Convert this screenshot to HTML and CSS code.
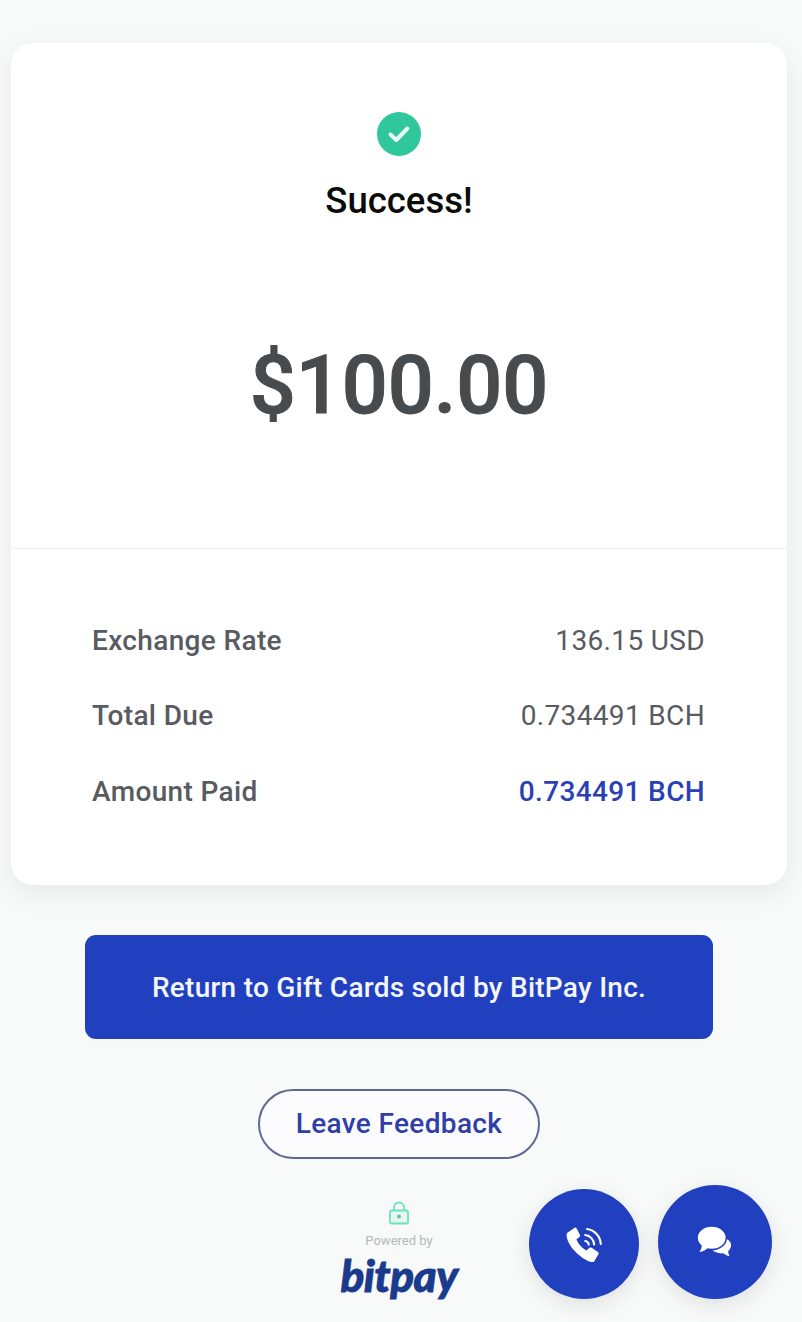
FILE: index.html
```html
<!DOCTYPE html>
<html lang="en">
<head>
  <meta charset="UTF-8" />
  <title>BitPay Invoice</title>
  <link rel="stylesheet" href="styles.css">
</head>
<body>
  <div class="card">
    <div class="card-top">
      <svg class="check" viewBox="0 0 44 44">
        <circle cx="22" cy="22" r="22" fill="#2fc79b" />
        <path d="M13.500 22.500l5.800 5.500 11-11.500" fill="none" stroke="#eafaf5" stroke-width="4" stroke-linecap="round" stroke-linejoin="round" />
      </svg>
      <div class="status">Success!</div>
      <div class="amount">$100.00</div>
    </div>
    <div class="rows">
      <div class="row"><span class="label">Exchange Rate</span><span class="value">136.15 USD</span></div>
      <div class="row"><span class="label">Total Due</span><span class="value">0.734491 BCH</span></div>
      <div class="row"><span class="label">Amount Paid</span><span class="value paid">0.734491 BCH</span></div>
    </div>
  </div>

  <a class="btn-return">Return to Gift Cards sold by BitPay Inc.</a>
  <a class="btn-feedback">Leave Feedback</a>

  <div class="footer">
    <svg class="lock" viewBox="0 0 22 24">
      <path d="M6 10V6.500a5 5 0 0 1 10 0V10" fill="none" stroke="#6fe0bd" stroke-width="1.800" />
      <rect x="2" y="9.500" width="18" height="13" rx="1.500" fill="#e4f8f1" stroke="#6fe0bd" stroke-width="1.800" />
      <circle cx="11" cy="15.500" r="2" fill="#6fb8a8" />
    </svg>
    <div class="powered">Powered by</div>
    <div class="logo">bitpay</div>
  </div>

  <a class="fab fab-call">
    <svg viewBox="3 2 30 30" width="36" height="36">
      <path d="M4.500 7.500L10 3.600c.8-.5 1.500-.3 1.900.4l2.700 5.300c.3.7.2 1.300-.4 1.800l-2.500 2c1 3.200 4.600 7.500 8.300 9.300l2.400-2.100c.6-.5 1.300-.5 1.900-.1l5.300 3.400c.7.500.8 1.200.4 1.900l-3.600 6c-.5.700-1.100.9-2 .7C15 29.500 3.500 18 3.500 9.300c0-.8.300-1.400 1-1.800z" fill="#fff" />
      <path d="M19 9.500a8.500 8.500 0 0 1 7.500 8M20.500 4.500a13.500 13.500 0 0 1 11.500 12.500M19 14.500a3.500 3.500 0 0 1 3 3" fill="none" stroke="#fff" stroke-width="1.700" stroke-linecap="round" />
    </svg>
  </a>
  <a class="fab fab-chat">
    <svg viewBox="0 0 40 36" width="38" height="34">
      <path d="M24 13c6 0 13 3 13 8 0 3-1 5-3 6.500 0 2 .5 4 1.500 5.500-3-.5-5-1.500-6.500-3-5 .5-10-1-12-4z" fill="#fff" />
      <ellipse cx="16.500" cy="13.500" rx="15.500" ry="12.500" fill="#fff" stroke="#2140c0" stroke-width="1.600" />
      <path d="M6 21c0 3-1 5.500-2.500 7.500 4-.5 7-2 9-4.500z" fill="#fff" />
    </svg>
  </a>
</body>
</html>
```

FILE: styles.css
```css
html, body {
  margin: 0;
  height: 100%;
}
body {
  box-sizing: border-box;
  padding-right: 4px;
  background: #f8f9f9;
  font-family: Roboto, sans-serif;
  display: flex;
  flex-direction: column;
  align-items: center;
  overflow: hidden;
}
.card {
  box-sizing: border-box;
  width: 776px;
  height: 842px;
  margin-top: 43px;
  flex-shrink: 0;
  background: #fff;
  border-radius: 22px;
  box-shadow: 0 8px 28px rgba(0, 0, 0, 0.07);
}
.card-top {
  height: 505px;
  display: flex;
  flex-direction: column;
  align-items: center;
  border-bottom: 1px solid #f0f1f2;
}
.check {
  width: 44px;
  height: 44px;
  margin-top: 69px;
}
.status {
  font-size: 36.500px;
  line-height: 44px;
  font-weight: 500;
  color: #0b0b0b;
  margin-top: 23px;
}
.amount {
  font-size: 81px;
  line-height: 100px;
  font-weight: 500;
  -webkit-text-stroke: 1px #484b4e;
  color: #484b4e;
  margin-top: 113px;
}
.rows {
  padding: 53.500px 82px 0 81px;
}
.row {
  display: flex;
  justify-content: space-between;
  align-items: center;
  height: 75.500px;
  font-size: 28px;
  letter-spacing: 0.350px;
  color: #585b5f;
}
.label {
  font-weight: 500;
}
.paid {
  font-weight: 500;
  color: #2a40b4;
}
.btn-return {
  box-sizing: border-box;
  width: 628px;
  height: 104px;
  margin-top: 50px;
  flex-shrink: 0;
  display: flex;
  align-items: center;
  justify-content: center;
  background: #2140c0;
  border-radius: 11px;
  color: #f4f6fd;
  font-size: 28px;
  letter-spacing: 0.250px;
  font-weight: 500;
}
.btn-feedback {
  box-sizing: border-box;
  width: 282px;
  height: 70px;
  margin-top: 50px;
  padding-bottom: 2px;
  flex-shrink: 0;
  display: flex;
  align-items: center;
  justify-content: center;
  border: 2px solid #5f6894;
  border-radius: 35px;
  background: #fcfcfe;
  color: #2f3fa8;
  font-size: 28px;
  letter-spacing: 0.350px;
  font-weight: 500;
}
.footer {
  margin-top: 42px;
  display: flex;
  flex-direction: column;
  align-items: center;
}
.lock {
  width: 22px;
  height: 24px;
}
.powered {
  font-size: 13px;
  line-height: 14px;
  color: #b4b8bb;
  margin-top: 9px;
}
.logo {
  font-family: Lato, sans-serif;
  font-size: 44px;
  line-height: 36px;
  margin-top: 8.500px;
  font-weight: 900;
  font-style: italic;
  -webkit-text-stroke: 0.800px #1a3a8c;
  color: #1a3a8c;
  letter-spacing: -0.500px;
}
/* floating help buttons sit above the page */
.fab {
  position: absolute;
  display: flex;
  align-items: center;
  justify-content: center;
  border-radius: 50%;
  background: #2140c0;
  box-shadow: 0 6px 22px rgba(0, 0, 0, 0.1);
}
.fab-call {
  left: 529px;
  top: 1189px;
  width: 110px;
  height: 110px;
}
.fab-chat {
  left: 658px;
  top: 1185px;
  width: 114px;
  height: 114px;
}
```
